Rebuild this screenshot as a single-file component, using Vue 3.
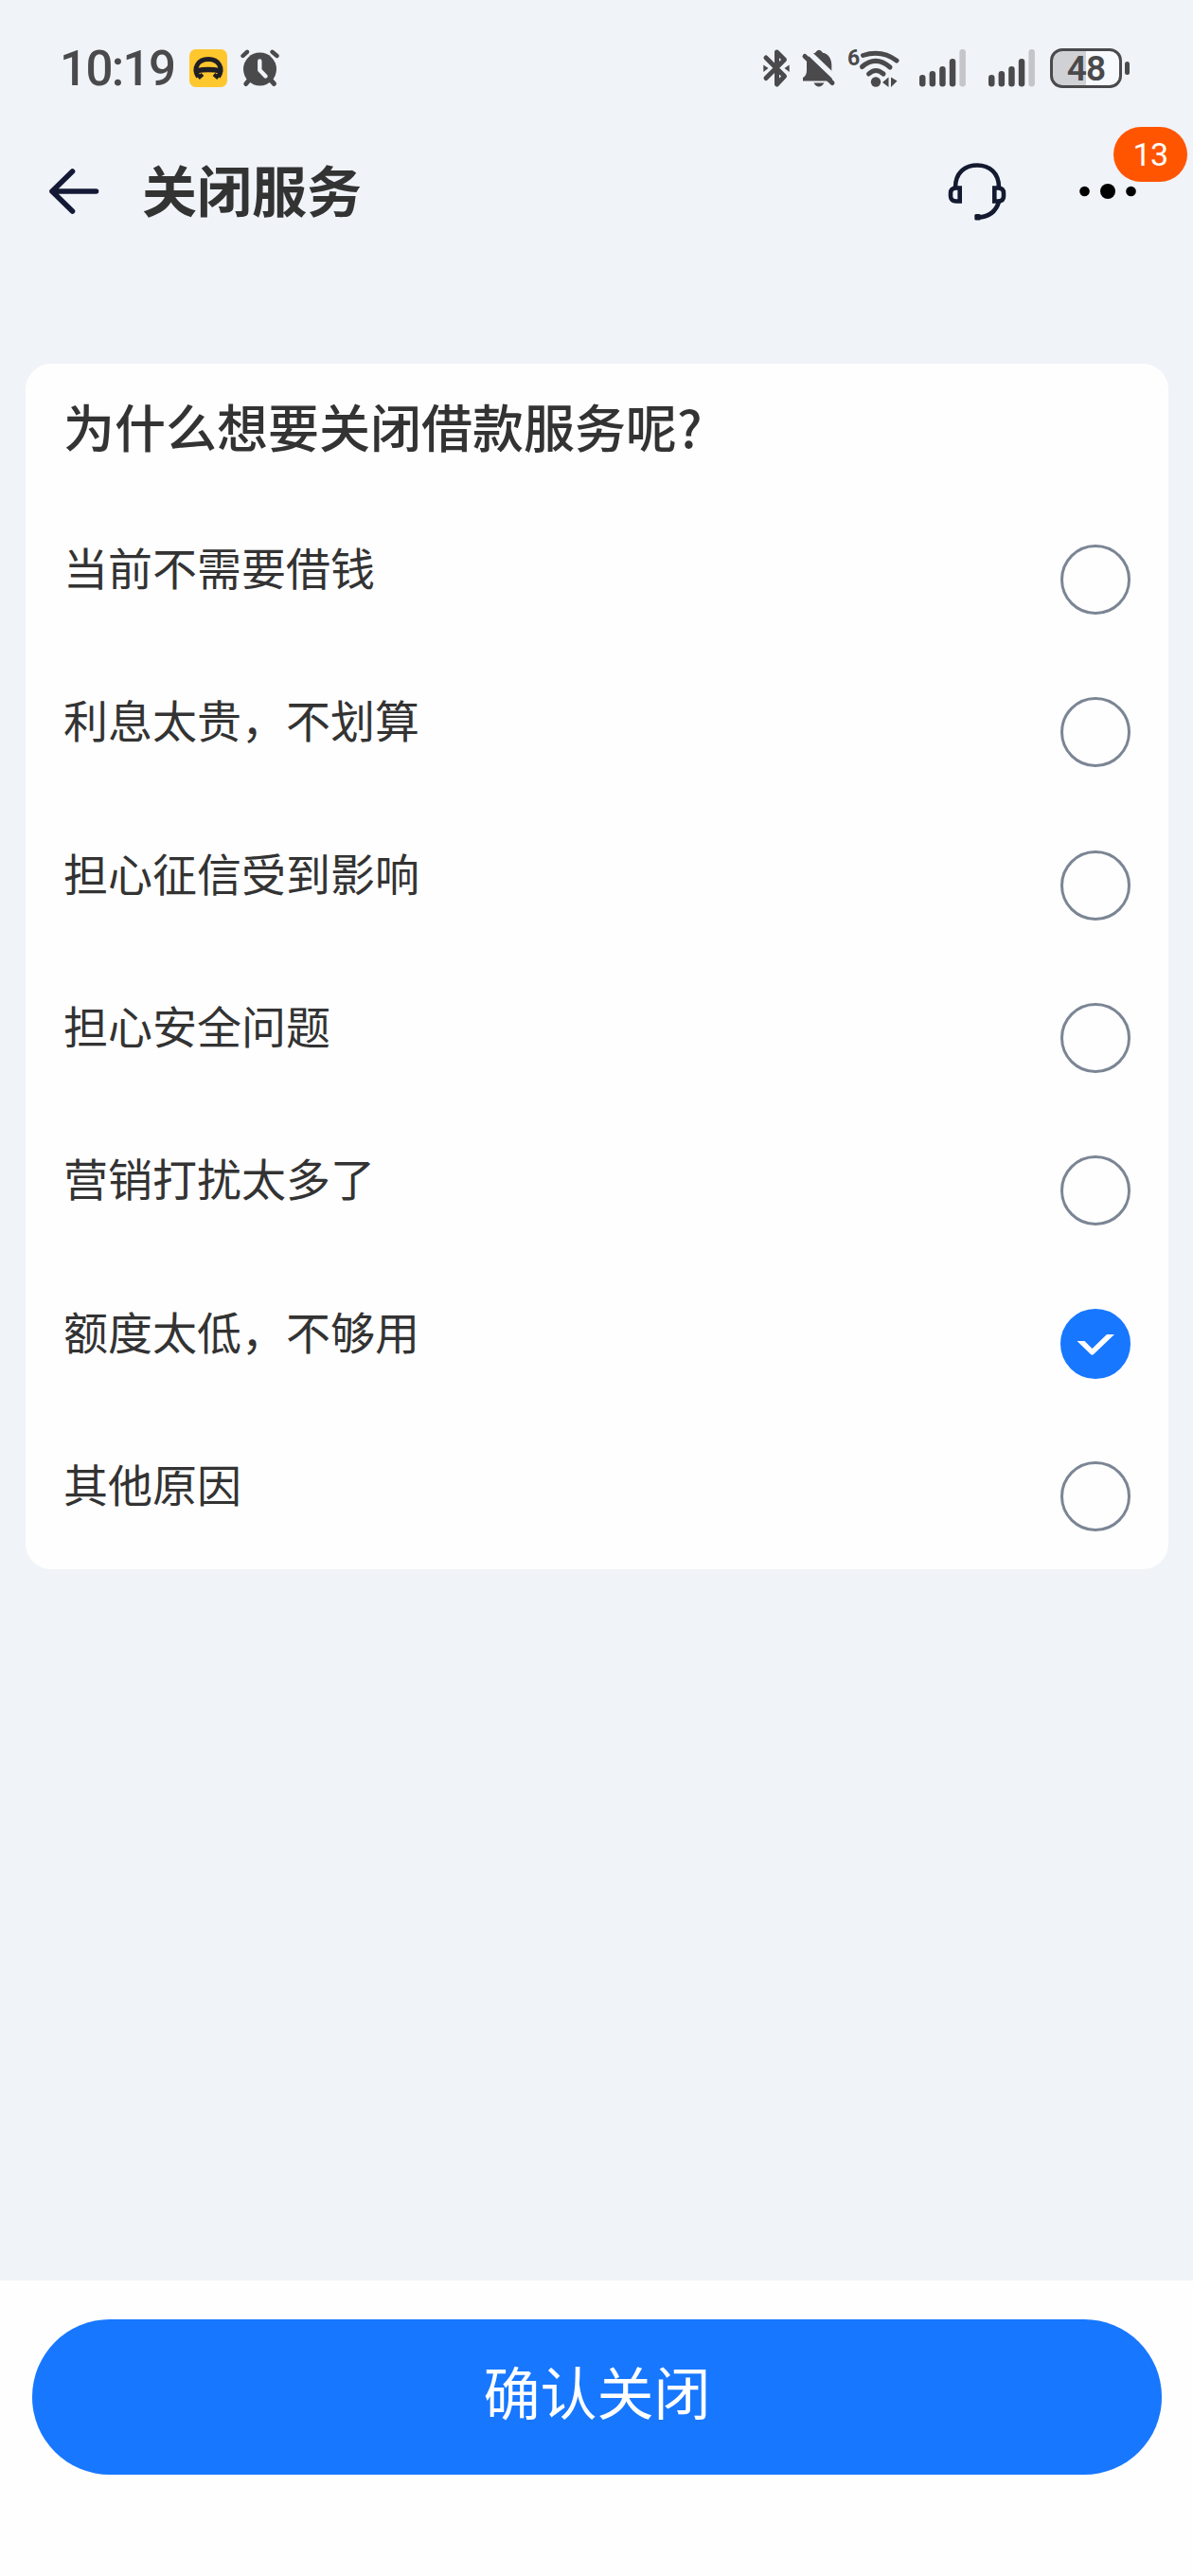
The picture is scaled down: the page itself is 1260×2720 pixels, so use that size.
<template>
  <div class="close-service">
    <div class="status-bar">
      <span class="time">10:19</span>
      <svg class="app-icon" width="40" height="40" viewBox="0 0 40 40">
        <rect width="40" height="40" rx="7" fill="#fec72e" />
        <path d="M9.500 29 C3.500 20 9 10.500 20 10.500 C31 10.500 36.500 20 30.500 29" fill="none" stroke="#1f1f24" stroke-width="5" />
        <path d="M7.500 20 Q20 17.500 32.500 20 V25.500 Q20 23 7.500 25.500 Z" fill="#1f1f24" />
        <path d="M9.500 30.500 L14 26.500 M30.500 30.500 L26 26.500" stroke="#1f1f24" stroke-width="4" />
      </svg>
      <svg class="alarm-icon" width="42" height="40" viewBox="0 0 42 40">
        <g stroke="#4a4a4c" stroke-linecap="round" fill="none">
          <path d="M2.500 7 L7 2.800 M33.500 2.800 L38.500 7" stroke-width="4.400" />
          <path d="M9.500 32 L5.800 36.500 M31.500 32 L35.500 36.500" stroke-width="5" />
        </g>
        <circle cx="20.500" cy="21" r="17.500" fill="#4a4a4c" />
        <path d="M20.300 12.500 V22 L26.500 28.500" fill="none" stroke="#f0f3f8" stroke-width="4.400" stroke-linecap="round" stroke-linejoin="round" />
      </svg>

      <div class="status-right">
        <svg class="bluetooth-icon" width="28" height="40" viewBox="0 0 28 40">
          <path d="M3 9 L22.500 28.500 L14.500 37 V3 L22.500 11 L3 30.500" fill="none" stroke="#4a4a4c" stroke-width="5" stroke-linecap="round" stroke-linejoin="round" />
          <path d="M14.500 16.500 V23.500" stroke="#4a4a4c" stroke-width="5" />
          <path d="M0.300 16.500 L5.500 20 L0.300 24 Z M27.700 16.500 L22.500 20 L27.700 24 Z" fill="#4a4a4c" />
        </svg>
        <svg class="bell-icon" width="36" height="40" viewBox="0 0 36 40">
          <path d="M1 33.500 V30 Q5 28 5 22 V15 C5 9 8.500 5 14 3.800 Q18 -2.500 22 3.800 C28 5 31 10 31.300 16 V23 L32 33.500 Z" fill="#4a4a4c" />
          <path d="M12.500 35.500 H23.500 Q21 39.500 18 39.500 Q14.500 39.500 12.500 35.500 Z" fill="#4a4a4c" />
          <path d="M0 -3.500 L36 31" stroke="#f0f3f8" stroke-width="5.500" />
          <path d="M3 7.500 L32 35.500" stroke="#4a4a4c" stroke-width="5" stroke-linecap="round" />
        </svg>
        <svg class="wifi-icon" width="56" height="42" viewBox="0 0 56 42">
          <g fill="none" stroke="#4a4a4c" stroke-width="5" stroke-linecap="round">
            <path d="M16.500 7.500 Q36 1 52 13" />
            <path d="M15.500 19.500 Q30 7 45 20" />
            <path d="M22.500 27 Q30 20 38 27" />
          </g>
          <circle cx="30" cy="35.500" r="5.200" fill="#4a4a4c" />
          <path d="M37 36 L43.500 30.500 V41 Z M46 30.500 L52.500 34.500 L46 41 Z" fill="#4a4a4c" />
          <text class="wifi-gen" x="0" y="18">6</text>
        </svg>
        <svg v-for="n in 2" :key="n" class="signal-icon" width="49" height="40" viewBox="0 0 49 40">
          <rect v-for="(bar, i) in signalBars" :key="i" :x="i * 10.6" :y="bar" width="6.500" :height="39.5 - bar" rx="3.200" :fill="i === 4 ? '#c3c5c8' : '#4a4a4c'" />
        </svg>
        <div class="battery">
          <div class="battery-body">48</div>
          <div class="battery-cap"></div>
        </div>
      </div>
    </div>

    <div class="header">
      <svg class="back-icon" width="54" height="50" viewBox="0 0 54 50">
        <path d="M25.500 4 L4 25 L25.500 46 M4 25 H50.500" fill="none" stroke="#141a36" stroke-width="5.600" stroke-linecap="round" stroke-linejoin="round" />
      </svg>
      <h1 class="header-title">关闭服务</h1>
      <svg class="service-icon" width="62" height="62" viewBox="0 0 62 62">
        <g fill="none" stroke="#141a30" stroke-width="4.600">
          <path d="M8 27 C8 11.500 18 3.500 31 3.500 C44 3.500 54 11.500 54 27" />
          <path d="M12.700 27.500 V41.500 H9 Q3 41.500 3 36 V33 Q3 27.500 9 27.500 Z" />
          <path d="M49.300 27.500 V41.500 H53 Q59 41.500 59 36 V33 Q59 27.500 53 27.500 Z" />
          <path d="M54 42 Q49 58 32 58.500" />
        </g>
        <rect x="28.300" y="55" width="6.500" height="6.500" rx="1.500" fill="#141a30" />
      </svg>
      <div class="more">
        <svg class="more-icon" width="60" height="16" viewBox="0 0 60 16">
          <circle cx="5.500" cy="8" r="5.300" />
          <circle cx="30" cy="8" r="8" />
          <circle cx="54.500" cy="8" r="5.300" />
        </svg>
        <span class="badge">13</span>
      </div>
    </div>

    <div class="reason-card">
      <h2 class="question">为什么想要关闭借款服务呢?</h2>
      <ul class="reason-list">
        <li v-for="(reason, index) in reasons" :key="reason" class="reason" @click="selected = index">
          <span class="reason-text">{{ reason }}</span>
          <span class="radio" :class="{ checked: selected === index }">
            <svg v-if="selected === index" width="40" height="24" viewBox="0 0 40 24">
              <path d="M0.500 8 H8.500 L16.500 16 L32 1 H40 L18 22 Q16.500 23.300 15 22 Z" fill="#ffffff" />
            </svg>
          </span>
        </li>
      </ul>
    </div>

    <div class="footer">
      <button type="button" class="confirm-button" @click="confirmClose">确认关闭</button>
    </div>
  </div>
</template>

<script setup>
import { ref } from 'vue';

const reasons = [
  '当前不需要借钱',
  '利息太贵，不划算',
  '担心征信受到影响',
  '担心安全问题',
  '营销打扰太多了',
  '额度太低，不够用',
  '其他原因',
];

const signalBars = [27, 23, 18, 10, 0];

const selected = ref(5);

const emit = defineEmits(['confirm']);

const confirmClose = () => {
  emit('confirm', reasons[selected.value]);
};
</script>

<style>
body {
  margin: 0;
  background: #f0f3f8;
}
</style>

<style scoped>
.close-service,
.close-service * {
  box-sizing: border-box;
}
.close-service {
  width: 1260px;
  height: 2720px;
  display: flex;
  flex-direction: column;
  background: #f0f3f8;
  color: #333333;
  font-family: "Noto Sans CJK SC", sans-serif;
}
.close-service svg {
  display: block;
  flex: none;
  overflow: visible;
}
.status-bar {
  height: 144px;
  padding: 0 67px 0 63px;
  display: flex;
  align-items: center;
}
.time {
  width: 137px;
  padding-top: 2px;
  font-family: Roboto, sans-serif;
  font-size: 51px;
  font-weight: 500;
  line-height: 60px;
  letter-spacing: -1.6px;
  color: #4a4a4c;
}
.alarm-icon {
  margin-left: 14px;
}
.status-right {
  margin-left: auto;
  display: flex;
  align-items: center;
}
.bell-icon {
  margin-left: 13px;
}
.wifi-icon {
  margin-left: 12px;
}
.signal-icon {
  margin-left: 24px;
}
.wifi-icon + .signal-icon {
  margin-left: 20px;
}
.wifi-gen {
  font-family: Roboto, sans-serif;
  font-size: 23px;
  font-weight: 700;
  fill: #4a4a4c;
}
.battery {
  width: 84px;
  margin-left: 16px;
  display: flex;
  align-items: center;
  gap: 3px;
}
.battery-body {
  width: 76px;
  height: 42px;
  border: 3.5px solid #4a4a4c;
  border-radius: 13px;
  background: linear-gradient(to right, #d0d1d4 50%, #f7f9fc 50%);
  color: #4a4a4c;
  font-family: Roboto, sans-serif;
  font-size: 37px;
  font-weight: 600;
  line-height: 37px;
  letter-spacing: -1px;
  text-align: center;
}
.battery-cap {
  width: 5px;
  height: 14px;
  border-radius: 2.5px;
  background: #4a4a4c;
}
.header {
  height: 116px;
  padding: 0 60px 0 51px;
  display: flex;
  align-items: center;
}
.header-title {
  margin: 0 auto 0 45px;
  padding-bottom: 7px;
  font-size: 58px;
  line-height: 80px;
  font-weight: 700;
}
.service-icon {
  margin-right: 77px;
}
.more {
  position: relative;
  width: 60px;
}
.badge {
  position: absolute;
  left: 36px;
  top: -60px;
  width: 78px;
  height: 58px;
  border-radius: 29px;
  background: #ff5500;
  color: #ffffff;
  font-family: Roboto, sans-serif;
  font-size: 34px;
  line-height: 59px;
  letter-spacing: -0.5px;
  text-align: center;
}
.reason-card {
  height: 1273px;
  margin: 124px 26px 0 27px;
  padding: 33px 40px 0;
  border-radius: 27px;
  background: #fefefe;
}
.question {
  margin: 0 0 92px;
  font-size: 54px;
  line-height: 66px;
  font-weight: 500;
}
.reason-list {
  margin: 0;
  padding: 0;
  list-style: none;
  display: grid;
  gap: 87.33px;
}
.reason {
  height: 74px;
  display: flex;
  align-items: flex-start;
  justify-content: space-between;
}
.reason-text {
  font-size: 47px;
  line-height: 45px;
}
.radio {
  width: 74px;
  height: 74px;
  display: flex;
  align-items: center;
  justify-content: center;
  border: 3px solid #7b8594;
  border-radius: 50%;
}
.radio.checked {
  padding-top: 3px;
  border-color: #1777ff;
  background: #1777ff;
}
.footer {
  height: 312px;
  margin-top: auto;
  padding: 41px 33px 0 34px;
  background: #fefefe;
}
.confirm-button {
  width: 100%;
  height: 164px;
  padding: 0 0 14px;
  border: none;
  border-radius: 82px;
  background: #1777ff;
  color: #ffffff;
  font-family: inherit;
  font-size: 60px;
  line-height: 80px;
  cursor: pointer;
}
</style>
